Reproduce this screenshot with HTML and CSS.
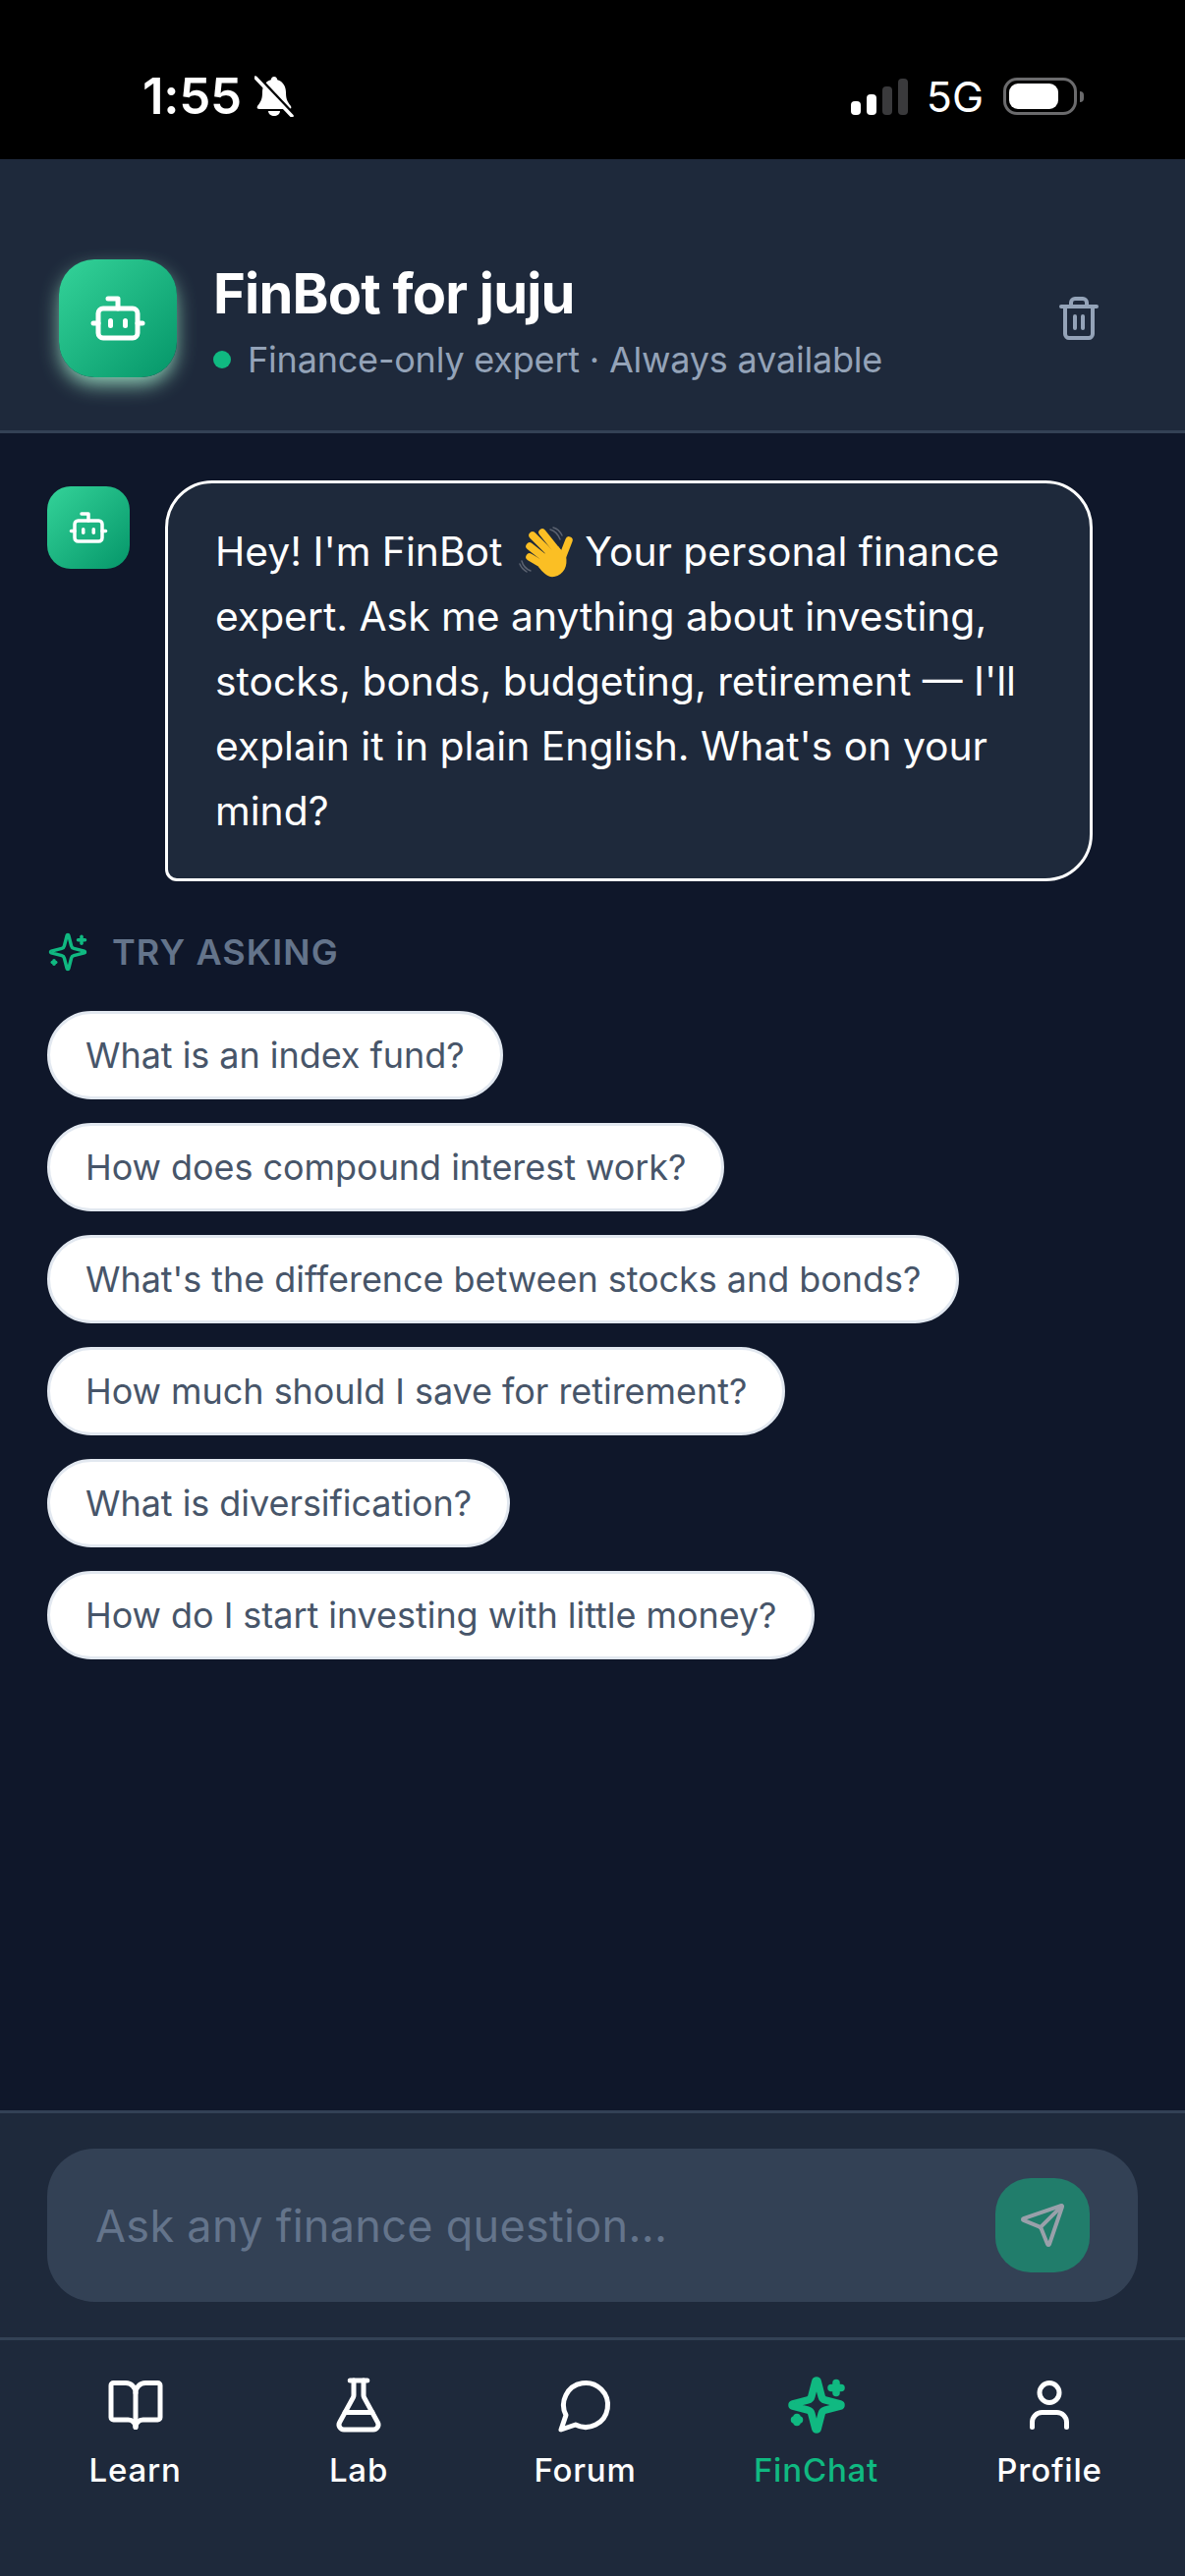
FILE: index.html
```html
<!DOCTYPE html>
<html lang="en">
<head>
    <meta charset="UTF-8">
    <meta name="viewport" content="width=device-width, initial-scale=1.0">
    <title>FinBot for juju</title>
    <link rel="stylesheet" href="styles.css">
</head>
<body>
    <div class="wrapper">
        <!-- 상태바 -->
        <div class="status-bar">
            <div class="status-left">
                <span class="status-time">1:55</span>
                <svg class="bell" viewBox="0 0 40 42">
                    <path class="bell-body" d="M20 1c2 0 3 1.500 3.300 3.300C29 6 32 11 32 17c0 6 1 9 5 14 1 2 0 3-2 3H5c-2 0-3-1-2-3 4-5 5-8 5-14C8 11 11 6 16.700 4.300 17 2.500 18 1 20 1z"/>
                    <path class="bell-body" d="M14 36h12c0 3-3 5-6 5s-6-2-6-5z"/>
                    <path class="bell-cut" d="M2 0l37 39"/>
                    <path class="bell-slash" d="M1 2l37 39"/>
                </svg>
            </div>
            <div class="status-right">
                <div class="signal">
                    <span class="bar bar-1"></span>
                    <span class="bar bar-2"></span>
                    <span class="bar bar-3"></span>
                    <span class="bar bar-4"></span>
                </div>
                <span class="network">5G</span>
                <div class="battery">
                    <div class="battery-body"><div class="battery-level"></div></div>
                    <div class="battery-nub"></div>
                </div>
            </div>
        </div>

        <div class="header">
            <div class="bot-avatar">
                <svg class="icon icon-bot-lg" viewBox="0 0 24 24">
                    <path d="M12 8V4H8"/><rect width="16" height="12" x="4" y="8" rx="2"/><path d="M2 14h2"/><path d="M20 14h2"/><path d="M15 13v2"/><path d="M9 13v2"/>
                </svg>
            </div>
            <div class="header-text">
                <h1>FinBot for juju</h1>
                <div class="header-sub"><span class="online-dot"></span>Finance-only expert · Always available</div>
            </div>
            <button class="trash-button">
                <svg class="icon icon-trash" viewBox="0 0 24 24">
                    <path d="M3 6h18"/><path d="M19 6v14c0 1-1 2-2 2H7c-1 0-2-1-2-2V6"/><path d="M8 6V4c0-1 1-2 2-2h4c1 0 2 1 2 2v2"/><path d="M10 11v6"/><path d="M14 11v6"/>
                </svg>
            </button>
        </div>

        <div class="content">
            <div class="message">
                <div class="bot-avatar-small">
                    <svg class="icon icon-bot-sm" viewBox="0 0 24 24">
                        <path d="M12 8V4H8"/><rect width="16" height="12" x="4" y="8" rx="2"/><path d="M2 14h2"/><path d="M20 14h2"/><path d="M15 13v2"/><path d="M9 13v2"/>
                    </svg>
                </div>
                <div class="bubble">Hey! I'm FinBot <svg class="wave-hand" viewBox="0 0 60 60" role="img" aria-label="waving hand">
                        <path class="wave-line" d="M34 5c4 1 8 5 10 10M37 3c4 1 7 4 9 8"/>
                        <path class="wave-line" d="M5 37c1 4 4 8 9 10M3 40c1 3 4 6 7 8"/>
                        <path class="hand-finger" d="M13 33L30 43"/>
                        <path class="hand-finger" d="M13 22L32 37"/>
                        <path class="hand-finger" d="M16 11L36 31"/>
                        <path class="hand-finger" d="M26 8L42 28"/>
                        <path class="hand-thumb" d="M53 16L46 34"/>
                        <path class="hand-palm" d="M24 32L42 22 50 32C52 42 48 51 38 53 31 54 27 49 22 43z"/>
                    </svg> Your personal finance expert. Ask me anything about investing, stocks, bonds, budgeting, retirement — I'll explain it in plain English. What's on your mind?</div>
            </div>

            <div class="try-label">
                <svg class="icon icon-sparkle-sm" viewBox="0 0 24 24">
                    <path d="M9.937 15.500A2 2 0 0 0 8.500 14.063l-6.135-1.582a.5.5 0 0 1 0-.962L8.500 9.936A2 2 0 0 0 9.937 8.500l1.582-6.135a.5.5 0 0 1 .963 0L14.063 8.500A2 2 0 0 0 15.500 9.937l6.135 1.581a.5.5 0 0 1 0 .964L15.500 14.063a2 2 0 0 0-1.437 1.437l-1.582 6.135a.5.5 0 0 1-.963 0z"/><path d="M20 3v4"/><path d="M22 5h-4"/><path d="M4 17v2"/><path d="M5 18H3"/>
                </svg>
                <span>TRY ASKING</span>
            </div>

            <div class="chips">
                <button class="chip">What is an index fund?</button>
                <button class="chip">How does compound interest work?</button>
                <button class="chip">What's the difference between stocks and bonds?</button>
                <button class="chip">How much should I save for retirement?</button>
                <button class="chip">What is diversification?</button>
                <button class="chip">How do I start investing with little money?</button>
            </div>
        </div>

        <div class="input-section">
            <div class="input-box">
                <input class="question-input" type="text" placeholder="Ask any finance question...">
                <button class="send-button">
                    <svg class="icon icon-send" viewBox="0 0 24 24">
                        <path d="M14.536 21.686a.5.5 0 0 0 .937-.024l6.500-19a.496.496 0 0 0-.635-.635l-19 6.500a.5.5 0 0 0-.024.937l7.930 3.180a2 2 0 0 1 1.112 1.110z"/><path d="m21.854 2.147-10.940 10.939"/>
                    </svg>
                </button>
            </div>
        </div>

        <div class="nav">
            <div class="nav-item">
                <svg class="icon icon-nav" viewBox="0 0 24 24">
                    <path d="M12 7v14"/><path d="M3 18a1 1 0 0 1-1-1V4a1 1 0 0 1 1-1h5a4 4 0 0 1 4 4 4 4 0 0 1 4-4h5a1 1 0 0 1 1 1v13a1 1 0 0 1-1 1h-6a3 3 0 0 0-3 3 3 3 0 0 0-3-3z"/>
                </svg>
                <span>Learn</span>
            </div>
            <div class="nav-item">
                <svg class="icon icon-nav" viewBox="0 0 24 24">
                    <path d="M14 2v6a2 2 0 0 0 .245.960l5.510 10.080A2 2 0 0 1 18 22H6a2 2 0 0 1-1.755-2.960l5.510-10.080A2 2 0 0 0 10 8V2"/><path d="M6.453 15h11.094"/><path d="M8.500 2h7"/>
                </svg>
                <span>Lab</span>
            </div>
            <div class="nav-item">
                <svg class="icon icon-nav" viewBox="0 0 24 24">
                    <path d="M7.900 20A9 9 0 1 0 4 16.100L2 22Z"/>
                </svg>
                <span>Forum</span>
            </div>
            <div class="nav-item active">
                <svg class="icon icon-nav" viewBox="0 0 24 24">
                    <path d="M9.937 15.500A2 2 0 0 0 8.500 14.063l-6.135-1.582a.5.5 0 0 1 0-.962L8.500 9.936A2 2 0 0 0 9.937 8.500l1.582-6.135a.5.5 0 0 1 .963 0L14.063 8.500A2 2 0 0 0 15.500 9.937l6.135 1.581a.5.5 0 0 1 0 .964L15.500 14.063a2 2 0 0 0-1.437 1.437l-1.582 6.135a.5.5 0 0 1-.963 0z"/><path d="M20 3v4"/><path d="M22 5h-4"/><path d="M4 17v2"/><path d="M5 18H3"/>
                </svg>
                <span>FinChat</span>
            </div>
            <div class="nav-item">
                <svg class="icon icon-nav" viewBox="0 0 24 24">
                    <path d="M19 21v-2a4 4 0 0 0-4-4H9a4 4 0 0 0-4 4v2"/><circle cx="12" cy="7" r="4"/>
                </svg>
                <span>Profile</span>
            </div>
        </div>
    </div>
</body>
</html>
```

FILE: styles.css
```css
* {
    box-sizing: border-box;
}

body {
    font-family: Inter, "Noto Sans", sans-serif;
    margin: 0;
    padding: 0;
    background-color: #0f172a;
    color: #fff;
}

.wrapper {
    display: flex;
    flex-direction: column;
    height: 2622px;
    overflow: hidden;
}

button {
    border: none;
    padding: 0;
    font-family: inherit;
    cursor: pointer;
}

.icon {
    display: block;
    fill: none;
    stroke: currentColor;
    stroke-width: 2;
    stroke-linecap: round;
    stroke-linejoin: round;
    flex-shrink: 0;
}

/* status bar */
.status-bar {
    height: 162px;
    flex-shrink: 0;
    background-color: #000;
    display: flex;
    justify-content: space-between;
    align-items: center;
    padding: 34px 103px 0 145px;
}

.status-left,
.status-right {
    display: flex;
    align-items: center;
}

.status-time {
    font-size: 51px;
    font-weight: 600;
    line-height: 60px;
    letter-spacing: -0.3px;
}

.bell {
    width: 40px;
    height: 42px;
    margin-left: 13px;
}

.bell-body {
    fill: #fff;
}

.bell-cut {
    stroke: #000;
    stroke-width: 4;
    fill: none;
}

.bell-slash {
    stroke: #fff;
    stroke-width: 3.500;
    stroke-linecap: round;
    fill: none;
}

.signal {
    display: flex;
    align-items: flex-end;
    gap: 6px;
    height: 38px;
}

.bar {
    width: 10px;
    border-radius: 4px;
    background-color: #fff;
}

.bar-1 { height: 14px; }
.bar-2 { height: 21px; }
.bar-3 { height: 29px; background-color: #3a3a3c; }
.bar-4 { height: 37px; background-color: #3a3a3c; }

.network {
    font-family: Inter, sans-serif;
    font-size: 43px;
    line-height: 50px;
    margin-left: 19px;
}

.battery {
    display: flex;
    align-items: center;
    margin-left: 20px;
}

.battery-body {
    width: 75px;
    height: 38px;
    border: 3px solid #6b6b6d;
    border-radius: 14px;
    padding: 3px;
}

.battery-level {
    width: 50px;
    height: 100%;
    border-radius: 9px;
    background-color: #fff;
}

.battery-nub {
    width: 4px;
    height: 11px;
    margin-left: 3px;
    border-radius: 0 4px 4px 0;
    background-color: #6b6b6d;
}

/* header */
.header {
    flex-shrink: 0;
    display: flex;
    align-items: center;
    background-color: #1e293b;
    border-bottom: 3px solid #334155;
    padding: 93px 60px 45px 60px;
}

.bot-avatar {
    width: 120px;
    height: 120px;
    flex-shrink: 0;
    border-radius: 36px;
    background: linear-gradient(135deg, #34d399, #059669);
    box-shadow: 0 9px 21px -3px rgba(167, 243, 208, 0.9);
    display: flex;
    align-items: center;
    justify-content: center;
    margin-right: 37px;
}

.icon-bot-lg {
    width: 60px;
    height: 60px;
}

.header-text {
    flex: 1;
    margin-top: 11px;
}

h1 {
    margin: 0;
    font-size: 56px;
    line-height: 66px;
    font-weight: 700;
    letter-spacing: -0.8px;
}

.header-sub {
    display: flex;
    align-items: center;
    font-size: 36px;
    line-height: 54px;
    letter-spacing: -0.2px;
    color: #94a3b8;
    margin-top: 7px;
}

.online-dot {
    width: 18px;
    height: 18px;
    border-radius: 50%;
    background-color: #10b981;
    margin-right: 17px;
}

.trash-button {
    width: 96px;
    height: 96px;
    background: none;
    color: #94a3b8;
    display: flex;
    align-items: center;
    justify-content: center;
}

.icon-trash {
    width: 48px;
    height: 48px;
}

/* chat */
.content {
    flex: 1;
    padding: 48px 48px 0 48px;
}

.message {
    display: flex;
    align-items: flex-start;
}

.bot-avatar-small {
    width: 84px;
    height: 84px;
    flex-shrink: 0;
    border-radius: 24px;
    background: linear-gradient(135deg, #34d399, #059669);
    display: flex;
    align-items: center;
    justify-content: center;
    margin: 6px 36px 0 0;
}

.icon-bot-sm {
    width: 42px;
    height: 42px;
}

.bubble {
    max-width: 85%;
    background-color: #1e293b;
    border: 3px solid #fff;
    border-radius: 48px 48px 48px 12px;
    padding: 36px 48px;
    font-size: 40.800px;
    line-height: 66px;
}

.wave-hand {
    width: 60px;
    height: 60px;
    margin: 0 -2px 0 3px;
    vertical-align: -18px;
}

.wave-line {
    fill: none;
    stroke: #5b6270;
    stroke-width: 1.500;
    stroke-linecap: round;
}

.hand-finger,
.hand-thumb {
    fill: none;
    stroke: #fbbf24;
    stroke-width: 7.500;
    stroke-linecap: round;
}

.hand-palm {
    fill: #fbbf24;
}

.try-label {
    display: flex;
    align-items: center;
    gap: 24px;
    margin: 51px 0 39px 0;
    color: #64748b;
    font-size: 36px;
    line-height: 42px;
    font-weight: 600;
    letter-spacing: 1.100px;
}

.icon-sparkle-sm {
    width: 42px;
    height: 42px;
    color: #10b981;
}

.chips {
    display: flex;
    flex-direction: column;
    align-items: flex-start;
    gap: 24px;
}

.chip {
    background-color: #fff;
    border: 3px solid #e2e8f0;
    border-radius: 45px;
    padding: 15px 36px;
    font-size: 36px;
    line-height: 54px;
    letter-spacing: -0.05px;
    color: #475569;
    white-space: nowrap;
}

/* input */
.input-section {
    flex-shrink: 0;
    background-color: #1e293b;
    border-top: 3px solid #334155;
    padding: 36px 48px;
}

.input-box {
    display: flex;
    align-items: center;
    height: 156px;
    background-color: #334155;
    border-radius: 48px;
    padding: 0 49px;
}

.question-input {
    flex: 1;
    min-width: 0;
    background: none;
    border: none;
    outline: none;
    padding: 0;
    font-family: inherit;
    font-size: 45px;
    letter-spacing: 0.3px;
    color: #fff;
}

.question-input::placeholder {
    color: #64748b;
    opacity: 1;
}

.send-button {
    width: 96px;
    height: 96px;
    border-radius: 36px;
    background-color: #10b981;
    color: #fff;
    opacity: 0.5;
    display: flex;
    align-items: center;
    justify-content: center;
}

.icon-send {
    width: 48px;
    height: 48px;
}

/* bottom nav */
.nav {
    flex-shrink: 0;
    height: 243px;
    display: grid;
    grid-template-columns: 227px 228px 233px 237px 238px;
    background-color: #1e293b;
    border-top: 3px solid #334155;
    padding: 36px 19px 0 24px;
    align-items: start;
}

.nav-item {
    display: flex;
    flex-direction: column;
    align-items: center;
    gap: 12px;
    font-size: 33px;
    line-height: 48px;
    font-weight: 500;
    letter-spacing: 0.8px;
}

.icon-nav {
    width: 60px;
    height: 60px;
}

.nav-item.active {
    color: #10b981;
}

.nav-item.active .icon-nav {
    stroke-width: 3;
}
```
